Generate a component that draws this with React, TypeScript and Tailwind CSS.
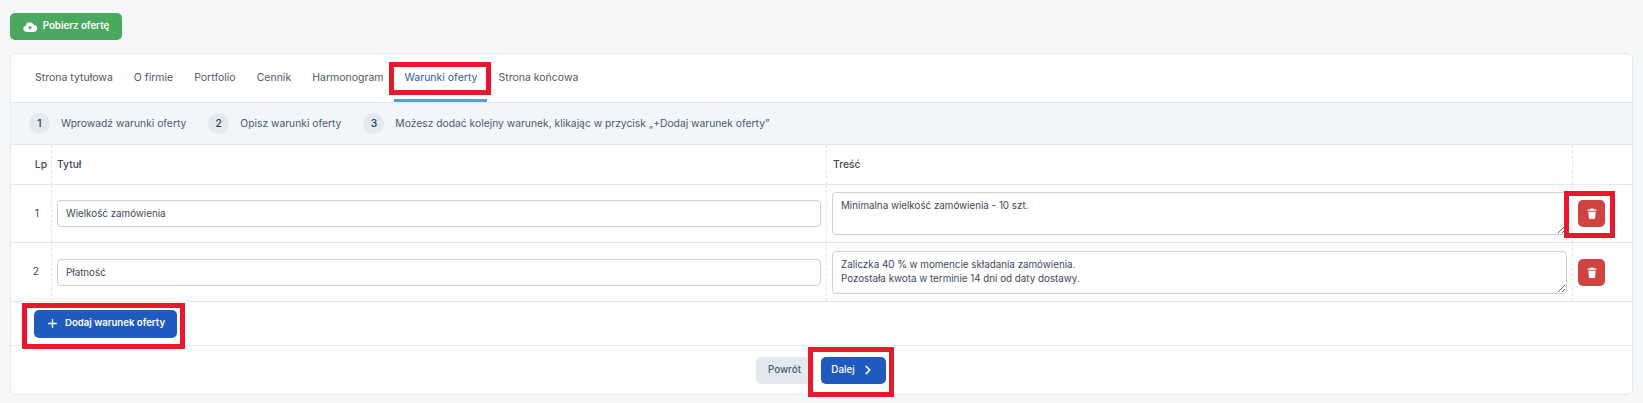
import { ChevronRight, Plus } from 'lucide-react';

const tabs = ['Strona tytułowa', 'O firmie', 'Portfolio', 'Cennik', 'Harmonogram', 'Warunki oferty', 'Strona końcowa'];

const steps = [
  'Wprowadź warunki oferty',
  'Opisz warunki oferty',
  'Możesz dodać kolejny warunek, klikając w przycisk „+Dodaj warunek oferty”',
];

const rows = [
  { lp: 1, title: 'Wielkość zamówienia', text: 'Minimalna wielkość zamówienia - 10 szt.', height: 'h-[58px]' },
  {
    lp: 2,
    title: 'Płatność',
    text: 'Zaliczka 40 % w momencie składania zamówienia.\nPozostała kwota w terminie 14 dni od daty dostawy.',
    height: 'h-[59px]',
  },
];

function CloudIcon() {
  return (
    <svg width="14" height="12" viewBox="0 0 20 16" fill="white">
      <path d="M5 15a4.5 4.5 0 0 1-1-8.9A6 6 0 0 1 15.4 5 5 5 0 0 1 15 15Z" />
      <path d="M10 6.5v5M7.5 9h5" stroke="#4aa85f" strokeWidth="1.8" />
    </svg>
  );
}

function TrashIcon() {
  return (
    <svg width="10" height="11" viewBox="0 0 10 12" fill="white">
      <path d="M3.4 0.5h3.2L7.2 1.5H9.8V3H0.2V1.5H2.8Z" />
      <path d="M1 4h8l-.6 7a1 1 0 0 1-1 .9H2.6a1 1 0 0 1-1-.9Z" />
    </svg>
  );
}

function RedBox({ className }: { className: string }) {
  return <div className={`absolute border-[5px] border-[#e8192c] pointer-events-none ${className}`} />;
}

export default function App() {
  return (
    <div className="relative h-[403px] overflow-hidden bg-[#f5f7f9] font-['Inter',sans-serif] text-[10.3px] text-[#4b5a6b]">
      <div className="h-[53px] pl-[10px] pt-[13px]">
        <button className="flex h-[27px] w-[112px] items-center justify-center gap-[6px] rounded-[5px] bg-[#4aa85f] text-[9.7px] font-semibold text-white">
          <CloudIcon />
          Pobierz ofertę
        </button>
      </div>

      <div className="mx-[10px] flex h-[342px] flex-col rounded-[6px] border border-[#e6eaee] bg-white">
        {/* Zakładki */}
        <div className="flex h-[48px] shrink-0 items-stretch gap-[1px] pl-[14px] text-[10.5px]">
          {tabs.map((tab) => (
            <div
              key={tab}
              className={
                tab === 'Warunki oferty'
                  ? 'flex items-center border-b-[3px] border-[#5b9fd6] px-[10px] pt-[3px] text-[#2f5da8]'
                  : 'flex items-center border-b-[3px] border-transparent px-[10px] pt-[3px]'
              }
            >
              {tab}
            </div>
          ))}
        </div>

        {/* Kroki */}
        <div className="flex h-[43px] shrink-0 items-center gap-[22px] border-y border-[#e3e8ee] bg-[#f3f6f9] pl-[18px]">
          {steps.map((step, i) => (
            <div key={step} className="flex items-center gap-[11px]">
              <span className="flex h-[21px] w-[21px] items-center justify-center rounded-full bg-[#e3e9ef] font-medium text-[#2c3e50]">
                {i + 1}
              </span>
              {step}
            </div>
          ))}
        </div>

        {/* Tabela */}
        <div className="grid h-[40px] shrink-0 grid-cols-[41px_775px_746px_1fr] border-b border-[#e6eaee] font-medium text-[#3d4a5a]">
          <div className="flex items-center justify-end border-r border-dashed border-[#e0e5ea] pr-[4px]">Lp</div>
          <div className="flex items-center border-r border-dashed border-[#e0e5ea] pl-[5px]">Tytuł</div>
          <div className="flex items-center border-r border-dashed border-[#e0e5ea] pl-[6px]">Treść</div>
          <div />
        </div>

        {rows.map((row) => (
          <div
            key={row.lp}
            className={`grid shrink-0 grid-cols-[41px_775px_746px_1fr] border-b border-[#e6eaee] text-[#3d4a5a] ${row.height}`}
          >
            <div className="flex items-center justify-end border-r border-dashed border-[#e0e5ea] pr-[12px]">{row.lp}</div>
            <div className="flex items-center border-r border-dashed border-[#e0e5ea] px-[5px]">
              <input
                readOnly
                value={row.title}
                className="h-[27px] w-full rounded-[4px] border border-[#c9d1d9] bg-white px-[8px] text-[9.8px] text-[#3d4a5a] outline-none"
              />
            </div>
            <div className="flex items-center border-r border-dashed border-[#e0e5ea] px-[5px]">
              <textarea
                readOnly
                value={row.text}
                className="h-[43px] w-full rounded-[4px] border border-[#c9d1d9] bg-white px-[8px] pb-[4px] pt-[6px] text-[9.8px] leading-[14px] text-[#3d4a5a] outline-none"
              />
            </div>
            <div className="flex items-center pl-[5px]">
              <button className="flex h-[27px] w-[27px] items-center justify-center rounded-[5px] bg-[#cf4440]">
                <TrashIcon />
              </button>
            </div>
          </div>
        ))}

        <div className="flex h-[44px] shrink-0 items-center border-b border-[#e6eaee] pl-[23px]">
          <button className="flex h-[28px] w-[143px] items-center justify-center gap-[6px] rounded-[5px] bg-[#1f5bbf] text-[9.6px] font-semibold text-white">
            <Plus size={13} strokeWidth={2.5} />
            Dodaj warunek oferty
          </button>
        </div>

        <div className="flex flex-1 items-center justify-center gap-[7px] pr-[2px] text-[9.8px]">
          <button className="h-[27px] w-[58px] rounded-[5px] bg-[#e3e9ef] font-medium text-[#4b5a6b]">Powrót</button>
          <button className="flex h-[27px] w-[65px] items-center justify-center gap-[6px] rounded-[5px] bg-[#1f5bbf] font-medium text-white">
            Dalej
            <ChevronRight size={14} strokeWidth={3} />
          </button>
        </div>
      </div>

      {/* Czerwone ramki z instrukcji */}
      <RedBox className="left-[389px] top-[62px] h-[33px] w-[102px]" />
      <RedBox className="left-[1564px] top-[191px] h-[47px] w-[51px]" />
      <RedBox className="left-[22px] top-[303px] h-[46px] w-[163px]" />
      <RedBox className="left-[808px] top-[347px] h-[50px] w-[86px]" />
    </div>
  );
}
